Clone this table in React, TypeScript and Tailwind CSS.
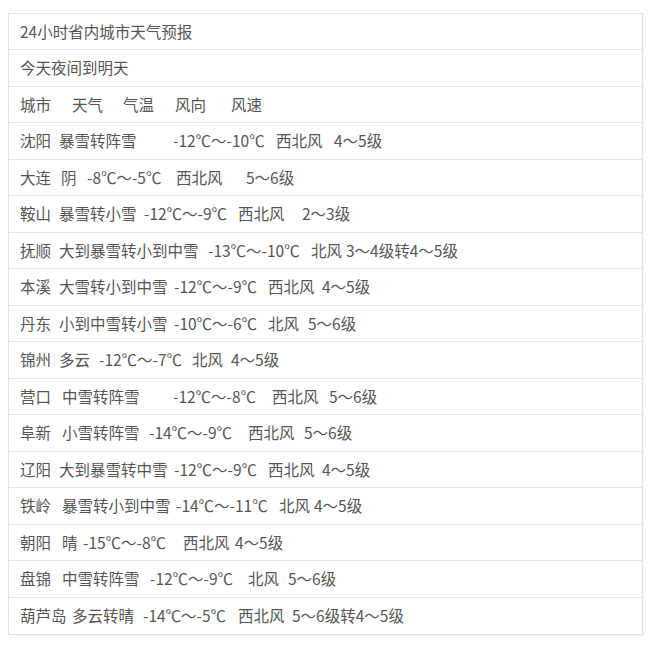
import React from 'react';

type Seg = [string, string];

const rows: Seg[][] = [
  [['沈阳', 'w-[39px]'], ['暴雪转阵雪', 'w-[114px]'], ['-12℃～-10℃', 'w-[103px]'], ['西北风', 'w-[58px]'], ['4～5级', '']],
  [['大连', 'w-[41px]'], ['阴', 'w-[26px]'], ['-8℃～-5℃', 'w-[89px]'], ['西北风', 'w-[70px]'], ['5～6级', '']],
  [['鞍山', 'w-[39px]'], ['暴雪转小雪', 'w-[85px]'], ['-12℃～-9℃', 'w-[94px]'], ['西北风', 'w-[64px]'], ['2～3级', '']],
  [['抚顺', 'w-[39px]'], ['大到暴雪转小到中雪', 'w-[149px]'], ['-13℃～-10℃', 'w-[103px]'], ['北风', 'w-[35px]'], ['3～4级转4～5级', '']],
  [['本溪', 'w-[39px]'], ['大雪转小到中雪', 'w-[115px]'], ['-12℃～-9℃', 'w-[94px]'], ['西北风', 'w-[54px]'], ['4～5级', '']],
  [['丹东', 'w-[39px]'], ['小到中雪转小雪', 'w-[115px]'], ['-10℃～-6℃', 'w-[94px]'], ['北风', 'w-[40px]'], ['5～6级', '']],
  [['锦州', 'w-[39px]'], ['多云', 'w-[40px]'], ['-12℃～-7℃', 'w-[93px]'], ['北风', 'w-[39px]'], ['4～5级', '']],
  [['营口', 'w-[42px]'], ['中雪转阵雪', 'w-[111px]'], ['-12℃～-8℃', 'w-[99px]'], ['西北风', 'w-[57px]'], ['5～6级', '']],
  [['阜新', 'w-[42px]'], ['小雪转阵雪', 'w-[87px]'], ['-14℃～-9℃', 'w-[99px]'], ['西北风', 'w-[56px]'], ['5～6级', '']],
  [['辽阳', 'w-[39px]'], ['大到暴雪转中雪', 'w-[115px]'], ['-12℃～-9℃', 'w-[94px]'], ['西北风', 'w-[54px]'], ['4～5级', '']],
  [['铁岭', 'w-[42px]'], ['暴雪转小到中雪', 'w-[114px]'], ['-14℃～-11℃', 'w-[103px]'], ['北风', 'w-[35px]'], ['4～5级', '']],
  [['朝阳', 'w-[42px]'], ['晴', 'w-[21px]'], ['-15℃～-8℃', 'w-[100px]'], ['西北风', 'w-[52px]'], ['4～5级', '']],
  [['盘锦', 'w-[42px]'], ['中雪转阵雪', 'w-[88px]'], ['-12℃～-9℃', 'w-[98px]'], ['北风', 'w-[40px]'], ['5～6级', '']],
  [['葫芦岛', 'w-[52px]'], ['多云转晴', 'w-[71px]'], ['-14℃～-5℃', 'w-[95px]'], ['西北风', 'w-[54px]'], ['5～6级转4～5级', '']],
];

const header: Seg[] = [
  ['城市', 'w-[52px]'],
  ['天气', 'w-[51px]'],
  ['气温', 'w-[52px]'],
  ['风向', 'w-[56px]'],
  ['风速', ''],
];

function Row({ children }: { children: React.ReactNode }) {
  return (
    <div className="h-[36.47px] border-b border-[#e6e6e6] last:border-b-0 flex items-center pl-[11px] whitespace-nowrap">
      {children}
    </div>
  );
}

function Segs({ segs }: { segs: Seg[] }) {
  return (
    <>
      {segs.map(([text, w], i) => (
        <span key={i} className={`inline-block shrink-0 ${w}`}>
          {text}
        </span>
      ))}
    </>
  );
}

export default function App() {
  return (
    <div className="w-[660px] h-[651px] bg-white pt-[13px] pl-[8px]">
      <div
        className="w-[635px] border border-[#e3e3e3] shadow-[1px_1px_2px_rgba(0,0,0,0.06)] text-[15.5px] text-[#555555] leading-none"
        style={{ fontFamily: '"Noto Sans CJK SC", "Noto Sans", sans-serif' }}
      >
        <Row>24小时省内城市天气预报</Row>
        <Row>今天夜间到明天</Row>
        <Row>
          <Segs segs={header} />
        </Row>
        {rows.map((r, i) => (
          <Row key={i}>
            <Segs segs={r} />
          </Row>
        ))}
      </div>
    </div>
  );
}
